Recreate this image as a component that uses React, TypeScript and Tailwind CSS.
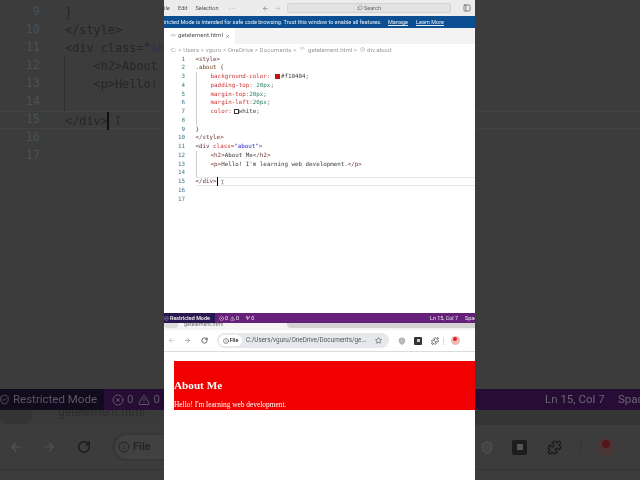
import React from 'react';
import { ArrowLeft, ArrowRight, CircleAlert, Info, PanelLeft, Puzzle, RotateCw, Search, Shield, ShieldCheck, Star, TextCursor, TriangleAlert, X, XCircle } from 'lucide-react';

const TAG = 'text-[#6e3535]';
const PROP = 'text-[#cf3434]';
const NUM = 'text-[#2a8562]';
const PLAIN = 'text-[#3c3c3c]';

type Token = [string, string];

const code: { tokens: Token[]; guide?: boolean; current?: boolean }[] = [
  { tokens: [['<style>', TAG]] },
  { tokens: [['.about {', 'text-[#6e4a2a]']] },
  { guide: true, tokens: [['    background-color: ', PROP], ['  ', PLAIN], ['#f10404;', PLAIN]] },
  { guide: true, tokens: [['    padding-top: ', PROP], ['20px', NUM], [';', PLAIN]] },
  { guide: true, tokens: [['    margin-top:', PROP], ['20px', NUM], [';', PLAIN]] },
  { guide: true, tokens: [['    margin-left:', PROP], ['20px', NUM], [';', PLAIN]] },
  { guide: true, tokens: [['    color:', PROP], ['  ', PLAIN], ['white;', PLAIN]] },
  { guide: true, tokens: [] },
  { tokens: [['}', PLAIN]] },
  { tokens: [['</style>', TAG]] },
  { tokens: [['<div ', TAG], ['class=', PROP], ['"about"', 'text-[#2a2ad0]'], ['>', TAG]] },
  { guide: true, tokens: [['    <h2>', TAG], ['About Me', PLAIN], ['</h2>', TAG]] },
  { guide: true, tokens: [['    <p>', TAG], ["Hello! I'm learning web development.", PLAIN], ['</p>', TAG]] },
  { guide: true, tokens: [] },
  { current: true, tokens: [['</div>', TAG]] },
  { tokens: [] },
  { tokens: [] },
];

function CodeLine({ n, line }: { n: number; line: (typeof code)[number] }) {
  return (
    <div className="flex h-[8.75px] leading-[8.75px]">
      <div className="w-[21px] shrink-0 text-right text-[#3f7480]">{n}</div>
      <div className={`relative ml-[10.5px] flex-1 whitespace-pre ${line.current ? 'border-y-[0.5px] border-[#e8e8e8] leading-[7.75px]' : ''} ${line.guide ? 'border-l-[0.5px] border-[#cccccc]' : ''}`}>
        {line.tokens.map(([text, color], i) => (
          <span key={i} className={color}>{text}</span>
        ))}
        {n === 3 && <span className="absolute left-[78.5px] top-[1.5px] h-[5px] w-[5px] bg-[#c81010]" />}
        {n === 7 && <span className="absolute left-[37px] top-[1.5px] h-[5px] w-[5px] border-[0.5px] border-[#333] bg-white" />}
        {line.current && (
          <>
            <span className="absolute left-[21px] top-[-1px] h-[9px] w-[1px] bg-black" />
            <TextCursor className="absolute left-[24px] top-[0px] h-[8px] w-[5px] text-[#444]" strokeWidth={1.5} />
          </>
        )}
      </div>
    </div>
  );
}

function Frame() {
  return (
    <div className="flex h-[480px] w-[311px] shrink-0 flex-col overflow-hidden bg-white font-['Roboto',sans-serif] blur-[0.4px]">
      {/* vscode title bar */}
      <div className="flex h-[16px] shrink-0 items-center whitespace-nowrap bg-[#ececec] text-[5.6px] text-[#555]">
        <span className="-ml-[3px] w-[17px] shrink-0">File</span>
        <span className="w-[17.5px] shrink-0">Edit</span>
        <span className="w-[33.5px] shrink-0">Selection</span>
        <span className="w-[7px] shrink-0 tracking-[1px]">···</span>
        <ArrowLeft className="ml-[26px] h-[7px] w-[7px] shrink-0 text-[#777]" />
        <ArrowRight className="ml-[5px] h-[7px] w-[7px] shrink-0 text-[#bbb]" />
        <div className="ml-[6px] flex h-[10px] w-[164px] shrink-0 items-center justify-center gap-[1px] rounded-[2px] border-[0.5px] border-[#d4d4d4] bg-[#e2e2e2] text-[#666]">
          <Search className="h-[6px] w-[6px] -scale-x-100" />
          Search
        </div>
        <PanelLeft className="ml-[12px] h-[8px] w-[8px] shrink-0 text-[#555]" />
      </div>
      {/* restricted mode banner */}
      <div className="flex h-[12px] shrink-0 items-center whitespace-nowrap bg-[#0b4f92] text-[5.55px] text-[#e8eef6]">
        <span className="-ml-[10px] w-[227px] shrink-0">Restricted Mode is intended for safe code browsing. Trust this window to enable all features.</span>
        <span className="ml-[7px] w-[21px] shrink-0 underline">Manage</span>
        <span className="ml-[7px] shrink-0 underline">Learn More</span>
      </div>
      {/* tabs */}
      <div className="flex h-[16px] shrink-0 bg-[#f3f3f3]">
        <div className="flex w-[71px] items-center whitespace-nowrap bg-white pl-[7px] text-[6.2px] text-[#555]">
          <span className="w-[7px] shrink-0 text-[4.5px] text-[#888]">&lt;&gt;</span>
          <span className="w-[47px] shrink-0">getelement.html</span>
          <X className="h-[5px] w-[5px] shrink-0 text-[#444]" />
        </div>
      </div>
      {/* breadcrumbs */}
      <div className="flex h-[10.5px] shrink-0 items-center whitespace-nowrap pl-[7px] text-[6.1px] text-[#9a9a9a]">
        <span className="w-[129px] shrink-0 tracking-[0.1px]">C: &gt; Users &gt; vguru &gt; OneDrive &gt; Documents &gt;</span>
        <span className="w-[8px] shrink-0 text-[4.5px]">&lt;&gt;</span>
        <span className="w-[52px] shrink-0">getelement.html &gt;</span>
        <CircleAlert className="mr-[2px] h-[5px] w-[5px] shrink-0" />
        <span>div.about</span>
      </div>
      {/* editor */}
      <div className="h-[258.5px] shrink-0 font-['DejaVu_Sans_Mono',monospace] text-[5.85px]">
        {code.map((line, i) => (
          <CodeLine key={i} n={i + 1} line={line} />
        ))}
      </div>
      {/* status bar */}
      <div className="flex h-[10px] shrink-0 items-center whitespace-nowrap bg-[#65207a] text-[5.4px] text-[#eee]">
        <div className="flex h-full w-[51px] shrink-0 items-center gap-[1px] bg-[#2a1650] font-semibold">
          <ShieldCheck className="h-[5px] w-[5px] shrink-0" />
          Restricted Mode
        </div>
        <XCircle className="ml-[4px] h-[5px] w-[5px] shrink-0" />
        <span className="ml-[1px]">0</span>
        <TriangleAlert className="ml-[2px] h-[5px] w-[5px] shrink-0" />
        <span className="ml-[1px]">0</span>
        <span className="ml-[7px]">Ψ 0</span>
        <span className="ml-auto">Ln 15, Col 7</span>
        <span className="ml-[7px] w-[10px] shrink-0 overflow-hidden">Spaces</span>
      </div>
      {/* chrome tab strip, cut off by the status bar */}
      <div className="flex h-[7px] shrink-0 items-start overflow-hidden bg-[#f4f4f4]">
        <div className="h-[5px] w-[14px] shrink-0 rounded-b-[3px] bg-[#dcdcdc]" />
        <span className="ml-[6px] -mt-[3px] shrink-0 text-[5.4px] text-[#777]">getelement.html</span>
        <div className="ml-[64px] h-[5px] flex-1 rounded-bl-[4px] bg-[#d2d2d2]" />
      </div>
      {/* chrome toolbar */}
      <div className="flex h-[22px] shrink-0 items-center border-b-[0.5px] border-[#dcdcdc] bg-white">
        <ArrowLeft className="ml-[4px] h-[7px] w-[7px] shrink-0 text-[#b0b0b0]" />
        <ArrowRight className="ml-[9px] h-[7px] w-[7px] shrink-0 text-[#777]" />
        <RotateCw className="ml-[10px] h-[7px] w-[7px] shrink-0 text-[#333]" strokeWidth={2.5} />
        <div className="ml-[9px] flex h-[15px] w-[172px] shrink-0 items-center rounded-full bg-[#e6e8eb] pl-[2px]">
          <div className="flex h-[11px] w-[23px] shrink-0 items-center justify-center gap-[1px] rounded-full bg-white text-[5.4px] font-semibold text-[#333]">
            <Info className="h-[6px] w-[6px] shrink-0" />
            File
          </div>
          <span className="ml-[4px] w-[122px] shrink-0 whitespace-nowrap text-[6.35px] text-[#555]">C:/Users/vguru/OneDrive/Documents/ge...</span>
          <Star className="ml-[7px] h-[7px] w-[7px] shrink-0 text-[#444]" />
        </div>
        <Shield className="ml-[9px] h-[8px] w-[8px] shrink-0 fill-[#bbb] text-[#999]" />
        <div className="ml-[8px] flex h-[8px] w-[8px] shrink-0 items-center justify-center rounded-[1px] bg-[#333]">
          <div className="h-[3px] w-[3px] bg-[#ccc]" />
        </div>
        <Puzzle className="ml-[9px] h-[8px] w-[8px] shrink-0 text-[#222]" />
        <div className="ml-[4px] h-[8px] w-[0.5px] shrink-0 bg-[#ddd]" />
        <div className="ml-[7px] flex h-[9px] w-[9px] shrink-0 items-start justify-center overflow-hidden rounded-full bg-[#f4b8b8]">
          <div className="mt-[1px] h-[4px] w-[4px] rounded-full bg-[#d22]" />
        </div>
      </div>
      {/* rendered page */}
      <div className="flex-1 pl-[10px] pt-[9px] font-['Liberation_Serif',serif] text-white">
        <div className="h-[49px] overflow-hidden bg-[#f10000] pt-[17px]">
          <h2 className="text-[11.2px] font-bold leading-[14px]">About Me</h2>
          <p className="mt-[9px] text-[7.4px] leading-[8px]">Hello! I'm learning web development.</p>
        </div>
      </div>
    </div>
  );
}

const sideCode: [number, React.ReactNode][] = [
  [9, '}'],
  [10, '</style>'],
  [11, <>&lt;div class="<span className="text-[#2c3350]">about</span>"&gt;</>],
  [12, '    <h2>About Me</h2>'],
  [13, "    <p>Hello! I'm learning web development.</p>"],
  [14, ''],
  [15, '</div>'],
  [16, ''],
  [17, ''],
];

function LeftSide() {
  return (
    <div className="h-[480px] w-[164px] shrink-0 overflow-hidden bg-[#3c3c3c]">
      <div className="-ml-[4px] flex h-[480px] w-[172px] flex-col pl-[4px] font-['DejaVu_Sans_Mono',monospace] blur-[0.5px]">
        <div className="pt-[3px] text-[11.85px] text-[#262626]">
          {sideCode.map(([n, text]) => (
            <div key={n} className={`flex h-[18px] items-center whitespace-pre ${n === 15 ? 'border-y border-[#424242]' : ''}`}>
              <span className="w-[40px] shrink-0 text-right text-[#47535a]">{n}</span>
              <span className={`relative ml-[24px] h-full leading-[18px] ${n >= 12 && n <= 14 ? 'border-l border-[#2e2e2e]' : 'pl-[1px]'}`}>
                {text}
                {n === 15 && (
                  <>
                    <span className="absolute left-[43px] top-0 h-[18px] w-[2px] bg-[#111]" />
                    <TextCursor className="absolute left-[49px] top-0 h-[17px] w-[10px] text-[#222]" strokeWidth={1.5} />
                  </>
                )}
              </span>
            </div>
          ))}
        </div>
        <div className="mt-auto flex h-[21px] shrink-0 items-center whitespace-nowrap bg-[#270d36] font-['Roboto',sans-serif] text-[11.5px] text-[#5c5866]">
          <div className="flex h-full w-[104px] shrink-0 items-center gap-[3px] bg-[#120a1d]">
            <ShieldCheck className="-ml-[1px] h-[11px] w-[11px] shrink-0" />
            Restricted Mode
          </div>
          <XCircle className="ml-[8px] h-[12px] w-[12px] shrink-0" />
          <span className="ml-[3px] shrink-0">0</span>
          <TriangleAlert className="ml-[5px] h-[12px] w-[12px] shrink-0" />
          <span className="ml-[3px] shrink-0">0</span>
        </div>
        <div className="flex h-[15px] shrink-0 items-start overflow-hidden bg-[#3a3a3a]">
          <div className="h-[14px] w-[32px] shrink-0 rounded-b-[8px] bg-[#343434]" />
          <span className="ml-[26px] -mt-[7px] shrink-0 font-['Roboto',sans-serif] text-[12px] text-[#2c2c2c]">getelement.html</span>
        </div>
        <div className="flex h-[45px] shrink-0 items-center border-b border-[#333] bg-[#3c3c3c] font-['Roboto',sans-serif]">
          <ArrowLeft className="ml-[9px] h-[14px] w-[14px] shrink-0 text-[#555]" />
          <ArrowRight className="ml-[19px] h-[14px] w-[14px] shrink-0 text-[#505050]" />
          <RotateCw className="ml-[21px] h-[14px] w-[14px] shrink-0 text-[#1c1c1c]" strokeWidth={2.5} />
          <div className="ml-[21px] flex h-[28px] flex-1 items-center rounded-l-full bg-[#373737] pl-[3px]">
            <div className="flex h-[24px] w-[70px] shrink-0 items-center gap-[3px] rounded-l-full bg-[#414141] pl-[3px] text-[11px] font-semibold text-[#242424]">
              <Info className="h-[12px] w-[12px] shrink-0" />
              File
            </div>
          </div>
        </div>
        <div className="h-[10px] shrink-0 bg-[#3c3c3c]" />
      </div>
    </div>
  );
}

function RightSide() {
  return (
    <div className="h-[480px] w-[165px] shrink-0 overflow-hidden bg-[#3c3c3c]">
      <div className="flex h-[480px] w-[170px] flex-col pt-[111px] font-['Roboto',sans-serif] blur-[0.5px]">
        <div className="h-[18px] border-y border-[#424242]" />
        <div className="mt-auto flex h-[21px] shrink-0 items-center whitespace-nowrap bg-[#270d36] pl-[70px] text-[11.5px] text-[#6a6572]">
          <span className="w-[73px] shrink-0">Ln 15, Col 7</span>
          <span className="shrink-0">Spaces</span>
        </div>
        <div className="h-[15px] shrink-0 bg-[#353535]" />
        <div className="flex h-[45px] shrink-0 items-center border-b border-[#333]">
          <Shield className="ml-[5px] h-[15px] w-[14px] shrink-0 fill-[#444] text-[#505050]" />
          <div className="ml-[18px] flex h-[15px] w-[15px] shrink-0 items-center justify-center rounded-[2px] bg-[#1d1d1d]">
            <div className="h-[6px] w-[6px] bg-[#555]" />
          </div>
          <Puzzle className="ml-[20px] h-[15px] w-[15px] shrink-0 text-[#191919]" />
          <div className="ml-[18px] h-[15px] w-px shrink-0 bg-[#333]" />
          <div className="ml-[16px] flex h-[18px] w-[18px] shrink-0 items-start justify-center overflow-hidden rounded-full bg-[#4a3636]">
            <div className="mt-[2px] h-[8px] w-[8px] rounded-full bg-[#581414]" />
          </div>
        </div>
        <div className="h-[10px] shrink-0" />
      </div>
    </div>
  );
}

export default function App() {
  return (
    <div className="flex h-[480px] w-[640px] overflow-hidden bg-[#3c3c3c]">
      <LeftSide />
      <Frame />
      <RightSide />
    </div>
  );
}
